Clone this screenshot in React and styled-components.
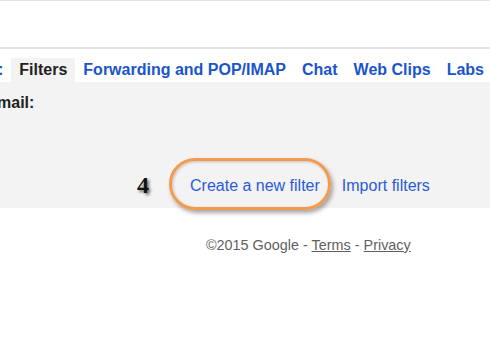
import React from 'react';
import styled, { createGlobalStyle } from 'styled-components';

const GlobalStyle = createGlobalStyle`
  html, body {
    margin: 0;
    padding: 0;
    background: #fff;
    overflow: hidden;
  }
  body {
    font-family: "Liberation Sans", Arial, sans-serif;
  }
`;

const tabs = ['Forwarding and POP/IMAP', 'Chat', 'Web Clips', 'Labs'];

const App = () => (
  <Page>
    <GlobalStyle />
    <Header />
    <TabBar>
      <Tab>:</Tab>
      <Tab active>Filters</Tab>
      {tabs.map((t) => (
        <Tab key={t}>{t}</Tab>
      ))}
    </TabBar>
    <Panel>
      <Label>mail:</Label>
      <Actions>
        <Step>4</Step>
        <Highlighted>
          <LinkText>Create a new filter</LinkText>
        </Highlighted>
        <LinkText>Import filters</LinkText>
      </Actions>
    </Panel>
    <Footer>
      ©2015 Google - <FooterLink>Terms</FooterLink> - <FooterLink>Privacy</FooterLink>
    </Footer>
  </Page>
);

export default App;

const Page = styled.div`
  width: 490px;
  height: 356px;
  border-top: 1px solid #e5e5e5;
  box-sizing: border-box;
`;

const Header = styled.div`
  height: 46px;
  border-bottom: 2px solid #e5e5e5;
`;

const TabBar = styled.div`
  display: flex;
  margin-top: 9px;
  margin-left: -10px;
  white-space: nowrap;
`;

const Tab = styled.div`
  padding: 0 8px;
  height: 24px;
  line-height: 24px;
  font-size: 16px;
  font-weight: bold;
  color: ${({ active }) => (active ? '#222' : '#1a55cc')};
  background: ${({ active }) => (active ? '#f3f3f3' : 'transparent')};
`;

const Panel = styled.div`
  background: #f3f3f3;
  height: 126px;
  padding-top: 12px;
  box-sizing: border-box;
`;

const Label = styled.div`
  font-size: 16px;
  font-weight: bold;
  color: #222;
  margin-left: -3px;
  line-height: 18px;
`;

const Actions = styled.div`
  display: flex;
  align-items: center;
  margin-top: 60px;
  padding-left: 137px;
`;

const Step = styled.div`
  font-family: "Liberation Serif", "Times New Roman", serif;
  font-weight: bold;
  font-size: 24px;
  color: #111;
  text-shadow: 2px 2px 3px rgba(0, 0, 0, 0.55);
  margin-right: 41px;
`;

const Highlighted = styled.div`
  position: relative;
  margin-right: 22px;

  &::before {
    content: '';
    position: absolute;
    left: -21px;
    right: -11px;
    top: -18px;
    bottom: -14px;
    border: 3px solid #f39a4e;
    border-radius: 26px;
    box-shadow: 2px 3px 4px rgba(0, 0, 0, 0.35), inset 1px 1px 3px rgba(0, 0, 0, 0.2);
  }
`;

const LinkText = styled.span`
  font-size: 16px;
  color: #2a5bd7;
  line-height: 20px;
  position: relative;
`;

const Footer = styled.div`
  margin-top: 28px;
  padding-left: 206px;
  font-size: 14.4px;
  color: #5f5f5f;
  line-height: 18px;
`;

const FooterLink = styled.span`
  text-decoration: underline;
`;
